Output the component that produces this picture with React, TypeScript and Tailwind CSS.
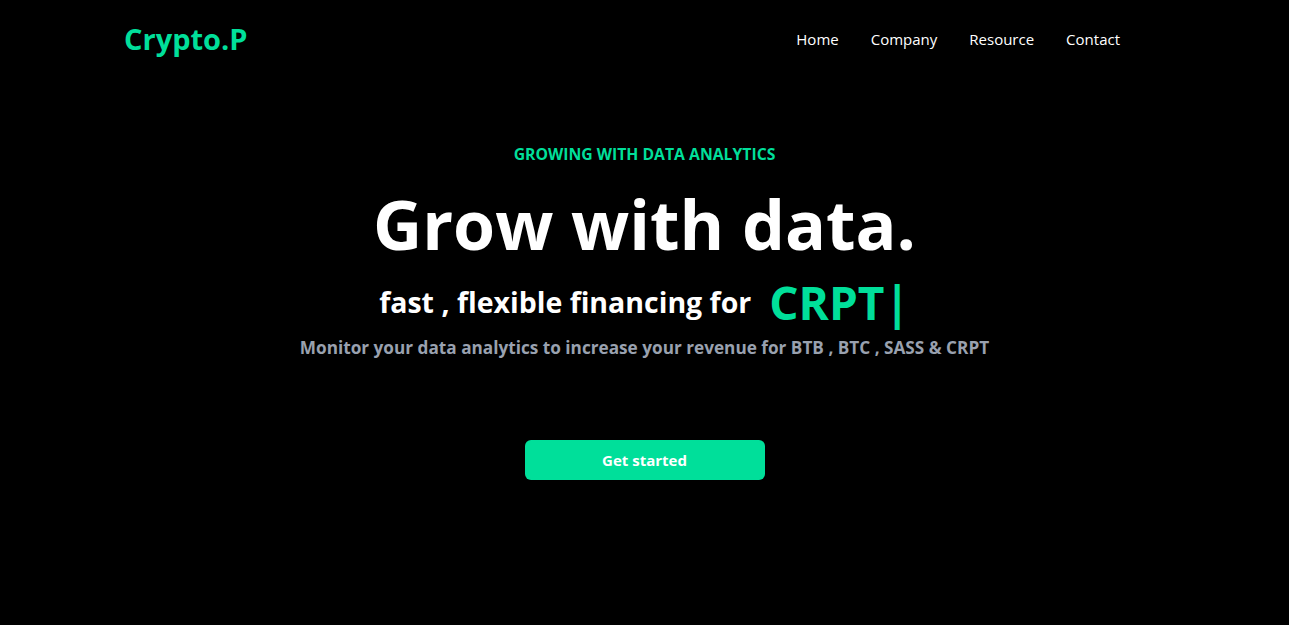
import React from "react";

export default function App() {
  return (
    <div
      className="min-h-screen w-full bg-black text-white"
      style={{ fontFamily: '"Open Sans", "Noto Sans", sans-serif' }}
    >
      <nav className="flex h-[78px] items-center justify-between pl-[124px] pr-[153px]">
        <h1 className="text-[29px] font-bold text-[#00df9a]">Crypto.P</h1>
        <ul className="flex text-[15px]">
          <li className="p-4">Home</li>
          <li className="p-4">Company</li>
          <li className="p-4">Resource</li>
          <li className="p-4">Contact</li>
        </ul>
      </nav>
      <div className="mx-auto flex w-full max-w-[800px] flex-col items-center pt-[64px] text-center">
        <p className="text-[15.75px] font-bold leading-6 text-[#00df9a]">GROWING WITH DATA ANALYTICS</p>
        <h1 className="mt-[22px] text-[68px] font-bold leading-[72px]">Grow with data.</h1>
        <div className="mt-[16px] flex items-center justify-center">
          <p className="text-[28.5px] font-bold">fast , flexible financing for</p>
          <p className="pl-[18px] text-[46px] font-bold leading-[52px] text-[#00df9a]">CRPT|</p>
        </div>
        <p className="mt-[7px] text-[17.2px] font-bold text-gray-400">
          Monitor your data analytics to increase your revenue for BTB , BTC , SASS &amp; CRPT
        </p>
        <button className="mt-[79px] h-10 w-[240px] rounded-md bg-[#00df9a] text-[15px] font-bold text-white">
          Get started
        </button>
      </div>
    </div>
  );
}
